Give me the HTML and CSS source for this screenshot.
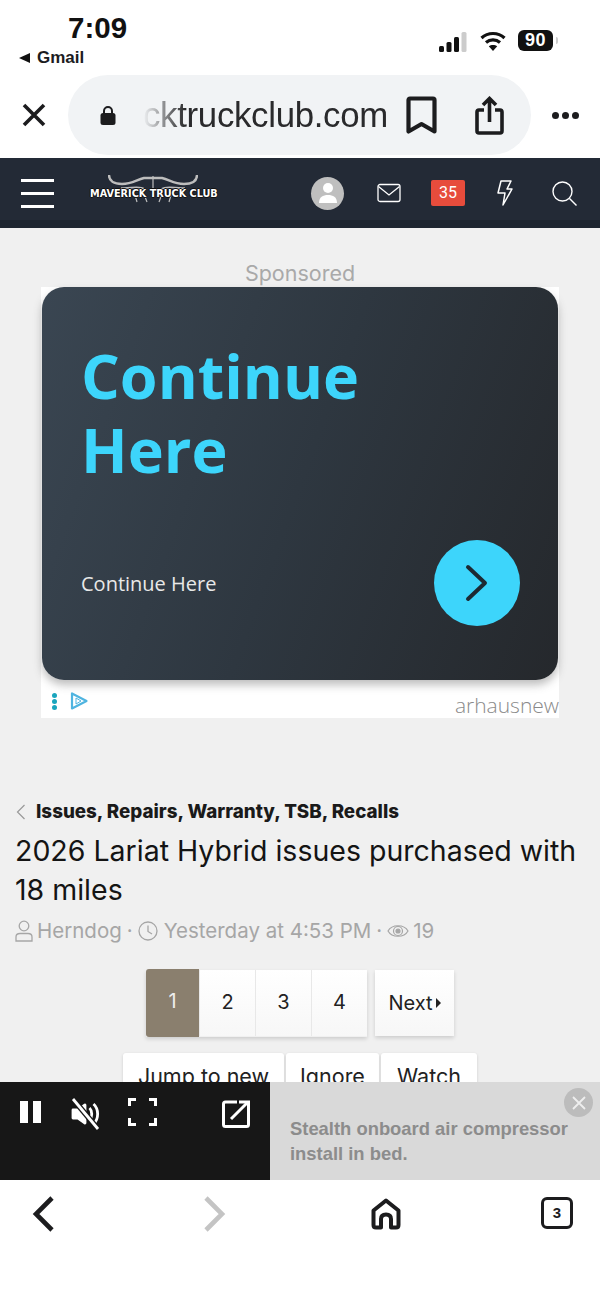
FILE: index.html
```html
<!DOCTYPE html>
<html lang="en">
<head>
    <meta charset="UTF-8">
    <meta name="viewport" content="width=device-width, initial-scale=1.0">
    <title>2026 Lariat Hybrid issues purchased with 18 miles</title>
    <link rel="stylesheet" href="styles.css">
</head>
<body>

<div class="phone">
    <div class="status">
        <div class="status-left">
            <div class="clock">7:09</div>
            <div class="back-app"><span class="back-tri"></span>Gmail</div>
        </div>
        <div class="status-right">
            <svg class="signal" width="28" height="20" viewBox="0 0 28 20">
                <rect x="0" y="14" width="5" height="6" rx="1.5" fill="#111"/>
                <rect x="7.5" y="10" width="5" height="10" rx="1.5" fill="#111"/>
                <rect x="15" y="5" width="5" height="15" rx="1.5" fill="#111"/>
                <rect x="22.5" y="0" width="5" height="20" rx="1.5" fill="#ccc"/>
            </svg>
            <svg class="wifi" width="26" height="20" viewBox="0 0 26 20" fill="none" stroke="#111" stroke-width="3.2">
                <path d="M1.5 7 C8 1 18 1 24.5 7"/>
                <path d="M6 11.5 C10 8 16 8 20 11.5"/>
                <path d="M13 20 L8.8 15.2 C11 13.5 15 13.5 17.2 15.2 Z" fill="#111" stroke="none"/>
            </svg>
            <div class="battery"><span class="battery-num">90</span></div>
            <span class="battery-tip"></span>
        </div>
    </div>

    <div class="urlbar">
        <svg class="icon-close" width="26" height="26" viewBox="0 0 26 26" stroke="#1c1c1e" stroke-width="3.6">
            <path d="M3 3 L23 23 M23 3 L3 23"/>
        </svg>
        <div class="url-pill">
            <svg class="icon-lock" width="16" height="20" viewBox="0 0 16 20">
                <path d="M4 9 V6 a4 4 0 0 1 8 0 V9" fill="none" stroke="#1c1c1e" stroke-width="2"/>
                <rect x="0.5" y="8" width="15" height="12" rx="2.5" fill="#1c1c1e"/>
            </svg>
            <span class="url-text">cktruckclub.com</span>
            <svg class="icon-bookmark" width="31" height="39" viewBox="0 0 31 39" fill="none" stroke="#1c1c1e" stroke-width="4.2">
                <path d="M2.5 35.5 V4 Q2.5 2.5 4 2.5 H27 Q28.5 2.5 28.5 4 V35.5 L15.5 28 Z" stroke-linejoin="round"/>
            </svg>
            <svg class="icon-share" width="29" height="39" viewBox="0 0 29 39" fill="none" stroke="#1c1c1e" stroke-width="3.6">
                <path d="M9 14 H4 Q2 14 2 16 V35 Q2 37 4 37 H25 Q27 37 27 35 V16 Q27 14 25 14 H20"/>
                <path d="M14.5 26 V3 M8 9 L14.5 2.5 L21 9"/>
            </svg>
        </div>
        <div class="more-dots"><span></span><span></span><span></span></div>
    </div>

    <div class="site-nav">
        <div class="burger"><span></span><span></span><span></span></div>
        <div class="site-logo">
            <svg class="logo-horns" width="90" height="30" viewBox="0 0 90 30" fill="none" stroke="#bdbdbd" stroke-width="2.4">
                <path d="M1 0 C1 6 6 9 14 9 C24 9 28 5 36 3 H54 C62 5 66 9 76 9 C84 9 89 6 89 0"/>
                <path d="M13 13 C22 14 30 10 37 14 M77 13 C68 14 60 10 53 14" stroke-width="1.6"/>
                <path d="M45 1 V18 M36 19 L39 27 M54 19 L51 27 M27 20 L29 27 M63 20 L61 27" stroke-width="1.2"/>
            </svg>
            <span class="logo-text">MAVERICK TRUCK CLUB</span>
        </div>
        <div class="nav-icons">
            <div class="avatar">
                <svg width="20" height="22" viewBox="0 0 20 22" fill="#fff">
                    <circle cx="10" cy="6" r="5"/>
                    <path d="M1 21 C1 15 5 13 10 13 C15 13 19 15 19 21 Z"/>
                </svg>
            </div>
            <svg class="icon-mail" width="24" height="20" viewBox="0 0 24 20" fill="none" stroke="#fff" stroke-width="1.3">
                <rect x="1" y="1.5" width="22" height="17" rx="2"/>
                <path d="M1.5 3.5 L12 12 L22.5 3.5"/>
            </svg>
            <div class="badge">35</div>
            <svg class="icon-bolt" width="18" height="26" viewBox="0 0 18 26" fill="none" stroke="#fff" stroke-width="1.5" stroke-linejoin="round">
                <path d="M5 1 H15 L11 9 H16 L7 25 L9 13 H2 Z"/>
            </svg>
            <svg class="icon-search" width="25" height="25" viewBox="0 0 25 25" fill="none" stroke="#fff" stroke-width="1.4">
                <circle cx="10.5" cy="10.5" r="9.5"/>
                <path d="M17.5 17.5 L24.5 24.5"/>
            </svg>
        </div>
    </div>

    <div class="content">
        <div class="sponsored">Sponsored</div>
        <div class="ad">
            <div class="ad-card">
                <div class="ad-headline">Continue<br>Here</div>
                <div class="ad-bottom">
                    <span class="ad-sub">Continue Here</span>
                    <div class="ad-go">
                        <svg width="26" height="40" viewBox="0 0 26 40" fill="none" stroke="#1d2a33" stroke-width="4" stroke-linecap="round" stroke-linejoin="round">
                            <path d="M4 4 L21 20 L4 36"/>
                        </svg>
                    </div>
                </div>
            </div>
            <div class="ad-foot">
                <div class="ad-marks">
                    <div class="ad-dots"><span></span><span></span><span></span></div>
                    <svg width="18" height="18" viewBox="0 0 18 18" fill="none" stroke="#4fb4e0" stroke-linejoin="round">
                        <path d="M2 1.5 V16.5 L16.5 9 Z" stroke-width="2.2"/>
                        <path d="M6 6 V12 L11 9 Z" stroke-width="1"/>
                    </svg>
                </div>
                <span class="ad-brand">arhausnew</span>
            </div>
        </div>

        <div class="crumb">
            <svg width="10" height="16" viewBox="0 0 10 16" fill="none" stroke="#999" stroke-width="1.2">
                <path d="M8.5 1 L1.5 8 L8.5 15"/>
            </svg>
            <span>Issues, Repairs, Warranty, TSB, Recalls</span>
        </div>
        <h1 class="thread-title">2026 Lariat Hybrid issues purchased with 18 miles</h1>
        <div class="thread-meta">
            <svg width="18" height="22" viewBox="0 0 18 22" fill="none" stroke="#a6a6a6" stroke-width="1.3">
                <circle cx="9" cy="6" r="4.8"/>
                <path d="M1 21 V17 Q1 13.5 5 13.5 H13 Q17 13.5 17 17 V21 Z"/>
            </svg>
            <span>Herndog</span>
            <span class="sep">·</span>
            <svg class="meta-clock" width="20" height="20" viewBox="0 0 20 20" fill="none" stroke="#a6a6a6" stroke-width="1.3">
                <circle cx="10" cy="10" r="9"/>
                <path d="M10 4.5 V10.5 L14 13"/>
            </svg>
            <span>Yesterday at 4:53 PM</span>
            <span class="sep">·</span>
            <svg width="22" height="16" viewBox="0 0 22 16" fill="none" stroke="#a6a6a6" stroke-width="1.2">
                <path d="M1 8 C5 1 17 1 21 8 C17 15 5 15 1 8 Z"/>
                <circle cx="11" cy="8" r="4.5"/>
                <circle cx="11" cy="8" r="2" fill="#a6a6a6"/>
            </svg>
            <span>19</span>
        </div>

        <div class="pager">
            <div class="pages">
                <div class="page-cell active">1</div>
                <div class="page-cell">2</div>
                <div class="page-cell">3</div>
                <div class="page-cell">4</div>
            </div>
            <div class="page-next">Next<span class="next-tri"></span></div>
        </div>
        <div class="thread-btns">
            <div class="thread-btn btn-jump">Jump to new</div>
            <div class="thread-btn btn-ignore">Ignore</div>
            <div class="thread-btn btn-watch">Watch</div>
        </div>
    </div>

    <div class="video-ad">
        <div class="video-controls">
            <div class="pause"><span></span><span></span></div>
            <svg class="icon-mute" width="30" height="32" viewBox="0 0 30 32" fill="none" stroke="#fff" stroke-width="2.8">
                <path d="M2 12 H7 L14 7 V25 L7 20 H2 Z" fill="#fff" stroke-linejoin="round"/>
                <path d="M18.5 10 C21.5 13 21.5 19 18.5 22 M22.5 6 C28 11 28 21 22.5 26"/>
                <path d="M2 1 L27 31" stroke="#171717" stroke-width="5.5"/>
                <path d="M2 1 L27 31" stroke-width="2.8"/>
            </svg>
            <svg class="icon-full" width="29" height="28" viewBox="0 0 29 28" fill="none" stroke="#fff" stroke-width="3">
                <path d="M1.5 8 V1.5 H8 M21 1.5 H27.5 V8 M27.5 20 V26.5 H21 M8 26.5 H1.5 V20"/>
            </svg>
            <svg class="icon-open" width="28" height="28" viewBox="0 0 28 28" fill="none" stroke="#fff" stroke-width="3">
                <path d="M15 2 H3.5 Q1.5 2 1.5 4 V24.5 Q1.5 26.5 3.5 26.5 H24.5 Q26.5 26.5 26.5 24.5 V2 H17"/>
                <path d="M9 19 L25 3"/>
            </svg>
        </div>
        <div class="video-text">
            <div class="video-close">
                <svg width="14" height="14" viewBox="0 0 14 14" stroke="#eee" stroke-width="1.8">
                    <path d="M1 1 L13 13 M13 1 L1 13"/>
                </svg>
            </div>
            <p>Stealth onboard air compressor install in bed.</p>
        </div>
    </div>

    <div class="toolbar">
        <svg class="tool-back" width="22" height="36" viewBox="0 0 22 36" fill="none" stroke="#1c1c1e" stroke-width="4.6">
            <path d="M20 2 L4 18 L20 34"/>
        </svg>
        <svg class="tool-forward" width="22" height="36" viewBox="0 0 22 36" fill="none" stroke="#c4c4c4" stroke-width="4.6">
            <path d="M2 2 L18 18 L2 34"/>
        </svg>
        <svg class="tool-home" width="30" height="32" viewBox="0 0 30 32" fill="none" stroke="#1c1c1e" stroke-width="4" stroke-linejoin="round">
            <path d="M2.5 12.5 L15 2.5 L27.5 12.5 V27 Q27.5 29.5 25 29.5 H20 V21 Q20 16.5 15 16.5 Q10 16.5 10 21 V29.5 H5 Q2.5 29.5 2.5 27 Z"/>
        </svg>
        <div class="tabs-count">3</div>
    </div>
</div>

</body>
</html>
```

FILE: styles.css
```css
* {
    margin: 0;
    padding: 0;
    box-sizing: border-box;
}

body {
    background: #fff;
    font-family: "Liberation Sans", sans-serif;
}

svg {
    display: block;
    flex: none;
}

.phone {
    position: relative;
    width: 600px;
    height: 1300px;
    overflow: hidden;
    background: #fff;
}

/* status bar */
.status {
    height: 76px;
    display: flex;
    justify-content: space-between;
    padding: 13px 42px 0 19px;
}

.clock {
    margin-left: 49px;
    font-size: 29.5px;
    line-height: 30px;
    font-weight: 700;
    color: #111;
}

.back-app {
    display: flex;
    align-items: center;
    gap: 7px;
    margin-top: 2px;
    font-size: 17px;
    line-height: 26px;
    font-weight: 700;
    color: #1c1c1e;
}

.back-tri {
    width: 0;
    height: 0;
    border-top: 5px solid transparent;
    border-bottom: 5px solid transparent;
    border-right: 11px solid #111;
}

.status-right {
    display: flex;
    align-items: center;
    height: 55px;
}

.signal {
    margin-right: 13px;
    margin-top: 2px;
}

.wifi {
    margin-right: 12px;
}

.battery {
    width: 35px;
    height: 21px;
    border-radius: 6px;
    background: #111;
    display: flex;
    align-items: center;
    justify-content: center;
}

.battery-num {
    font-size: 18px;
    font-weight: 700;
    color: #fff;
    letter-spacing: 0.5px;
}

.battery-tip {
    width: 2px;
    height: 7px;
    margin-left: 3px;
    background: #ccc;
    border-radius: 0 2px 2px 0;
}

/* browser url bar */
.urlbar {
    height: 82px;
    display: flex;
    align-items: center;
    padding: 0 21px 4px 21px;
}

.url-pill {
    width: 464px;
    height: 80px;
    margin-left: 21px;
    border-radius: 40px;
    background: #f1f3f5;
    display: flex;
    align-items: center;
    padding-left: 32px;
}

.url-text {
    width: 247px;
    margin-left: 27px;
    margin-right: 16px;
    font-size: 34.8px;
    letter-spacing: -0.3px;
    color: #2a2a2c;
    white-space: nowrap;
    -webkit-mask-image: linear-gradient(90deg, transparent 0, #000 42px);
    mask-image: linear-gradient(90deg, transparent 0, #000 42px);
}

.icon-share {
    margin-left: 38px;
}

.more-dots {
    display: flex;
    gap: 3px;
    margin-left: 21px;
}

.more-dots span {
    width: 7px;
    height: 7px;
    border-radius: 50%;
    background: #1c1c1e;
}

/* forum nav */
.site-nav {
    height: 70px;
    background: #232a36;
    border-bottom: 8px solid #1e2530;
    display: flex;
    align-items: center;
    padding: 8px 23px 0 21px;
}

.burger {
    width: 33px;
    display: flex;
    flex-direction: column;
    gap: 10px;
}

.burger span {
    height: 3px;
    background: #fff;
}

.site-logo {
    position: relative;
    width: 130px;
    height: 34px;
    margin-left: 35px;
}

.logo-horns {
    position: absolute;
    left: 19px;
    top: -1px;
}

.logo-text {
    position: absolute;
    left: 1px;
    top: 12px;
    font-family: "DejaVu Sans", sans-serif;
    font-size: 9.7px;
    font-weight: 700;
    line-height: 12px;
    color: #fff;
    white-space: nowrap;
    text-shadow: 1px 0 0 #111, -1px 0 0 #111, 0 1px 0 #111, 0 -1px 0 #111;
}

.nav-icons {
    display: flex;
    align-items: center;
    margin-left: auto;
}

.avatar {
    width: 33px;
    height: 33px;
    border-radius: 50%;
    background: #bfbfbf;
    display: flex;
    align-items: center;
    justify-content: center;
}

.icon-mail {
    margin-left: 33px;
}

.badge {
    width: 34px;
    height: 26px;
    margin-left: 30px;
    border-radius: 2px;
    background: #e74c3c;
    color: #fff;
    font-family: Roboto, sans-serif;
    font-size: 16px;
    line-height: 26px;
    text-align: center;
}

.icon-bolt {
    margin-left: 31px;
}

.icon-search {
    margin-left: 38px;
}

/* page */
.content {
    height: 1112px;
    background: #f0f0f0;
    padding-top: 32px;
}

.sponsored {
    text-align: center;
    font-family: "Inter", sans-serif;
    font-size: 21.5px;
    line-height: 27px;
    color: #a9a9a9;
}

.ad {
    width: 518px;
    height: 431px;
    margin-left: 41px;
    background: #fff;
}

.ad-card {
    width: 516px;
    height: 393px;
    margin-left: 1px;
    border-radius: 22px;
    background: linear-gradient(110deg, #3a4652 0%, #2e3740 50%, #25282c 100%);
    box-shadow: 0 5px 8px rgba(70, 70, 70, 0.35);
    padding: 52px 38px 0 39px;
    display: flex;
    flex-direction: column;
}

.ad-headline {
    font-family: "Open Sans", sans-serif;
    font-size: 61px;
    line-height: 74px;
    font-weight: 700;
    color: #3dd5fb;
}

.ad-bottom {
    display: flex;
    align-items: center;
    justify-content: space-between;
    margin-top: 53px;
}

.ad-sub {
    font-family: "Open Sans", sans-serif;
    font-size: 20px;
    color: #e8e8e8;
}

.ad-go {
    width: 86px;
    height: 86px;
    border-radius: 50%;
    background: #3dd5fb;
    display: flex;
    align-items: center;
    justify-content: center;
}

.ad-foot {
    display: flex;
    justify-content: space-between;
    align-items: center;
    height: 38px;
    padding: 8px 0 0 11px;
}

.ad-marks {
    display: flex;
    align-items: center;
    gap: 13px;
    margin-top: -4px;
}

.ad-dots {
    display: flex;
    flex-direction: column;
    gap: 1px;
}

.ad-dots span {
    width: 5px;
    height: 5px;
    border-radius: 50%;
    background: #1aa5bd;
}

.ad-brand {
    margin-top: 4px;
    font-family: "Open Sans", sans-serif;
    font-size: 21px;
    font-weight: 300;
    color: #8a8a8a;
}

.crumb {
    display: flex;
    align-items: center;
    gap: 10px;
    margin: 81px 0 0 16px;
    font-family: "Inter", sans-serif;
    font-size: 18.8px;
    line-height: 26px;
    font-weight: 800;
    color: #1a1a1a;
}

.thread-title {
    margin: 6px 15px 0;
    font-family: "Inter", sans-serif;
    font-size: 28.5px;
    line-height: 39px;
    font-weight: 400;
    color: #141414;
}

.thread-meta {
    display: flex;
    align-items: center;
    gap: 4px;
    margin: 9px 0 0 15px;
    font-family: "Inter", sans-serif;
    font-size: 20.5px;
    line-height: 26px;
    color: #a6a6a6;
}

.sep {
    margin: 0 1px;
}

.meta-clock {
    margin-right: 2px;
}

.pager {
    display: flex;
    justify-content: center;
    gap: 8px;
    margin-top: 26px;
}

.pages {
    display: flex;
    box-shadow: 0 2px 4px rgba(0, 0, 0, 0.15);
}

.page-cell {
    width: 56px;
    height: 66px;
    background: linear-gradient(#fff, #f7f7f7);
    border-left: 1px solid #e8e8e8;
    font-family: "Inter", sans-serif;
    font-size: 20px;
    line-height: 64px;
    text-align: center;
    color: #222;
}

.page-cell.active {
    width: 53px;
    height: 68px;
    margin-top: -1px;
    border: none;
    border-radius: 3px 0 0 3px;
    background: #8a7f6e;
    color: #eee;
}

.page-next {
    display: flex;
    align-items: center;
    justify-content: center;
    gap: 3px;
    width: 79px;
    height: 66px;
    background: linear-gradient(#fff, #f7f7f7);
    box-shadow: 0 2px 4px rgba(0, 0, 0, 0.15);
    font-family: "Inter", sans-serif;
    font-size: 20px;
    color: #222;
}

.next-tri {
    width: 0;
    height: 0;
    border-top: 5px solid transparent;
    border-bottom: 5px solid transparent;
    border-left: 5px solid #222;
}

.thread-btns {
    display: flex;
    justify-content: center;
    gap: 2px;
    margin-top: 16px;
}

.thread-btn {
    height: 60px;
    padding-top: 10px;
    background: #fff;
    border-radius: 3px 3px 0 0;
    box-shadow: 0 1px 3px rgba(0, 0, 0, 0.15);
    font-family: "Inter", sans-serif;
    font-size: 21.5px;
    text-align: center;
    color: #222;
}

.btn-jump {
    width: 161px;
}

.btn-ignore {
    width: 93px;
}

.btn-watch {
    width: 96px;
}

/* sticky video ad, sits over the page */
.video-ad {
    position: absolute;
    left: 0;
    top: 1082px;
    width: 600px;
    height: 98px;
    display: flex;
}

.video-controls {
    width: 270px;
    background: #171717;
    display: flex;
    align-items: flex-start;
    padding: 16px 0 0 20px;
}

.pause {
    display: flex;
    gap: 5px;
    margin-top: 3px;
}

.pause span {
    width: 8px;
    height: 22px;
    background: #fff;
}

.icon-mute {
    margin-left: 30px;
}

.icon-full {
    margin-left: 27px;
}

.icon-open {
    margin-left: 65px;
    margin-top: 2px;
}

.video-text {
    position: relative;
    flex: 1;
    background: #d9d9d9;
    padding: 35px 20px 0;
}

.video-text p {
    font-size: 18.4px;
    line-height: 24.5px;
    font-weight: 700;
    color: #8c8c8c;
}

.video-close {
    position: absolute;
    right: 7px;
    top: 6px;
    width: 29px;
    height: 29px;
    border-radius: 50%;
    background: #bcbcbc;
    display: flex;
    align-items: center;
    justify-content: center;
}

/* browser toolbar */
.toolbar {
    position: absolute;
    left: 0;
    top: 1180px;
    width: 600px;
    height: 120px;
    background: #fff;
    display: flex;
    align-items: flex-start;
    padding: 16px 27px 0 32px;
}

.tool-forward {
    margin-left: 150px;
}

.tool-home {
    margin-top: 2px;
    margin-left: 145px;
}

.tabs-count {
    width: 32px;
    height: 32px;
    margin-top: 1px;
    margin-left: auto;
    border: 3px solid #1c1c1e;
    border-radius: 6px;
    font-size: 15px;
    line-height: 26px;
    font-weight: 700;
    text-align: center;
    color: #1c1c1e;
}
```
